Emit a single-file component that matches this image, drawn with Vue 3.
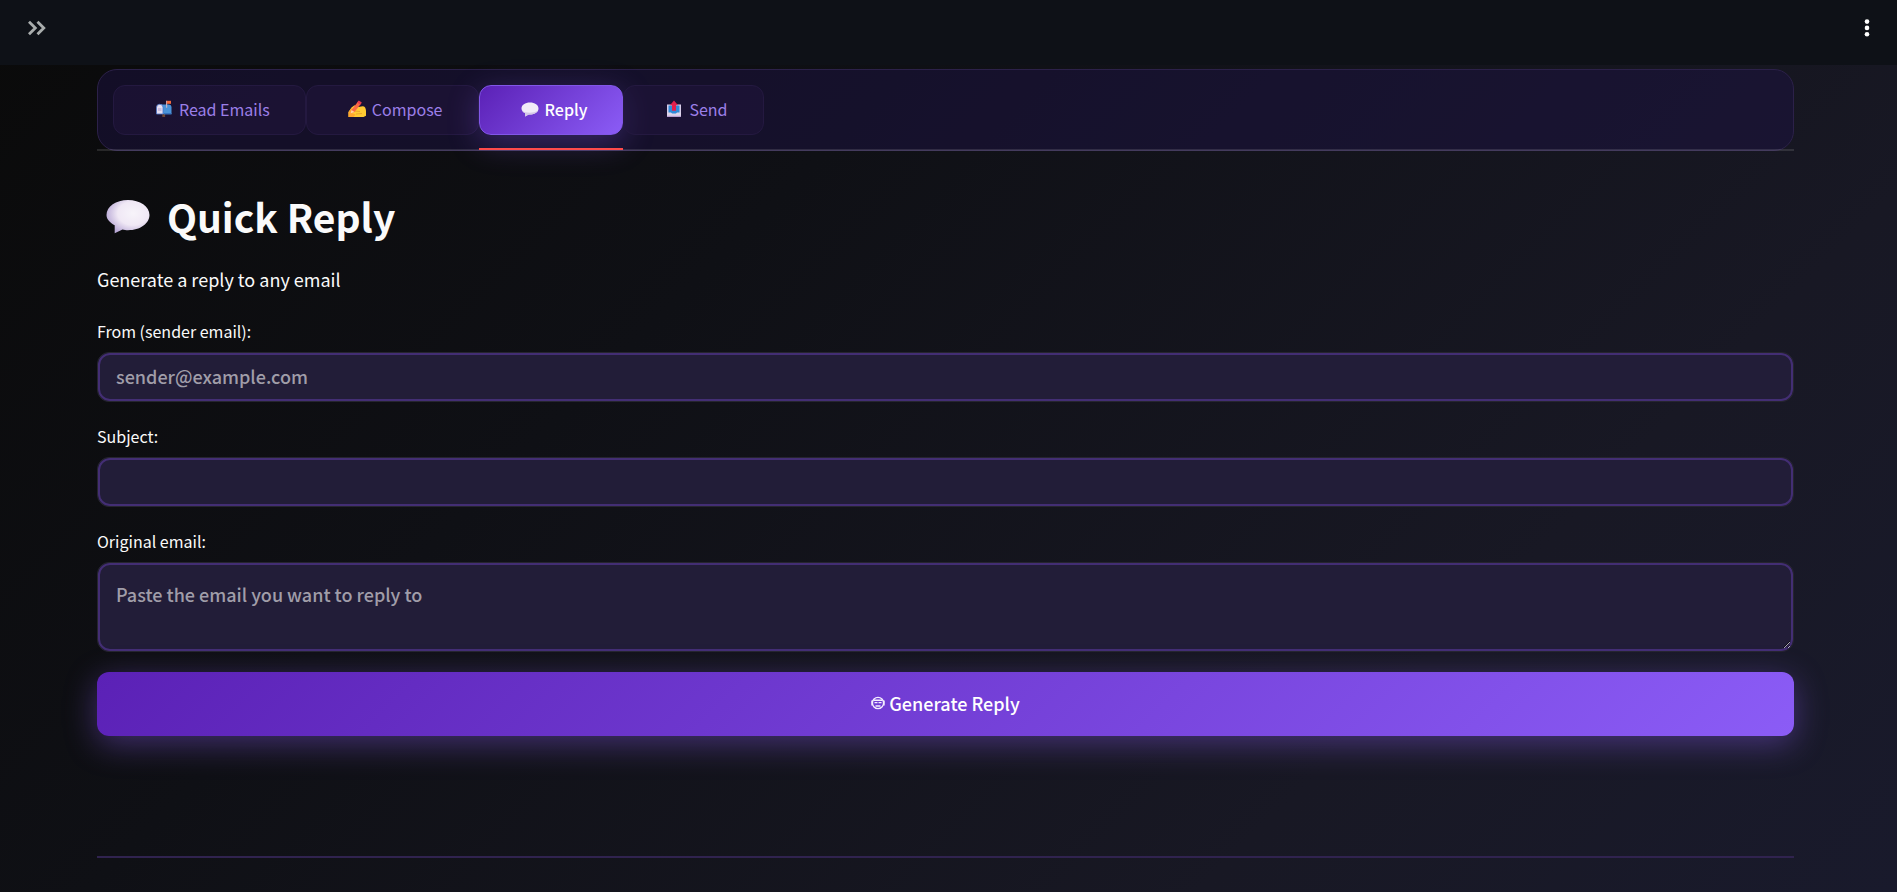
<script setup>
import { ref } from 'vue'

const tabs = [
  { id: 'read', label: 'Read Emails' },
  { id: 'compose', label: 'Compose' },
  { id: 'reply', label: 'Reply' },
  { id: 'send', label: 'Send' }
]
const active = ref('reply')
const sender = ref('')
const subject = ref('')
const original = ref('')
</script>

<template>
  <div class="app">
    <header class="topbar">
      <button class="icon-btn" type="button" aria-label="Open sidebar">
        <svg width="20" height="16" viewBox="0 0 20 16" fill="none" stroke="#a9adad" stroke-width="2.8">
          <path d="M2 1.700 8.300 8 2 14.300M10.500 1.700 16.800 8 10.500 14.300" />
        </svg>
      </button>
      <button class="icon-btn" type="button" aria-label="Main menu">
        <svg width="6" height="18" viewBox="0 0 6 18" fill="#fff">
          <circle cx="3" cy="2.600" r="2.300" /><circle cx="3" cy="8.900" r="2.300" /><circle cx="3" cy="15.200" r="2.300" />
        </svg>
      </button>
    </header>

    <main class="content">
      <div class="tabs" role="tablist">
        <button
          v-for="tab in tabs"
          :key="tab.id"
          type="button"
          role="tab"
          class="tab"
          :class="{ active: active === tab.id }"
          :aria-selected="active === tab.id"
          @click="active = tab.id"
        >
          <svg v-if="tab.id === 'read'" class="emoji" viewBox="0 0 18 18">
            <path d="M7.300 13h2.800v4H7.300z" fill="#6d4534" />
            <path d="M5 4.500h8.500a3 3 0 0 1 3 3V14H5z" fill="#4a93d8" />
            <path d="M9 13h7.500v1.500H9z" fill="#3673bd" />
            <path d="M1.500 7.500a3 3 0 0 1 6.500 0V14H1.500z" fill="#e6e0f2" stroke="#4a74c8" stroke-width=".8" />
            <path d="M3 8h3.500v3H3z" fill="#cbbddf" />
            <path d="M11 .8h1.200v7H11z" fill="#bcb3c9" />
            <path d="M11.700.8h4.300v3h-4.300z" fill="#f4693c" />
          </svg>
          <svg v-else-if="tab.id === 'compose'" class="emoji" viewBox="0 0 18 18">
            <path d="M.5 17V12l3-4.500 3-2.300 2.500 2 5.500-1c2.500 0 3.300 2 3.500 4.500v5l-2.500 1.300z" fill="#ffca32" />
            <path d="M.5 17V12l3-4 2 2-2 3 4 1.500-2 2.500z" fill="#ffa52e" />
            <path d="m6 11 6 .5M8 14l6-.5" stroke="#eba62d" fill="none" />
            <path d="m2.500 13.500 1-3.500 6.800-8.800 3 2.100L6.500 12z" fill="#fa6a45" />
            <path d="m9.200 2.500 1.600-2 3 2-1.500 2.200z" fill="#e9394e" />
            <path d="m2.500 13.500 1-3.500 3 2z" fill="#ffd6a0" />
          </svg>
          <svg v-else-if="tab.id === 'reply'" class="emoji" viewBox="0 0 18 18">
            <path d="M9 2.500c4.800 0 8.500 2.500 8.500 6s-3.700 6-8.500 6H7.800L4 16.500l.3-3.200C2 12.200.5 10.600.5 8.500c0-3.500 3.700-6 8.500-6z" fill="#f1ebf8" />
            <path d="M1 10.500c3 3 12 3 16 0-1.500 2.500-4.500 4-8 4H7.800L4 16.500l.3-3.200C2.800 12.600 1.500 11.700 1 10.500z" fill="#d3c6e6" />
          </svg>
          <svg v-else class="emoji" viewBox="0 0 18 18">
            <path d="M2 4.500h14V17H2z" fill="#d8cde8" />
            <path d="M3.500 5.500h11v8h-11z" fill="#2f8bd8" />
            <path d="M2 12.500h4l1.500 1.800h3l1.500-1.800h4V17H2z" fill="#ded5ea" />
            <path d="M2 15.800h14V17H2z" fill="#b89fd0" />
            <path d="m9 .5 4 4.700h-2v5.600H7V5.200H5z" fill="#e3204b" />
          </svg>
          <span>{{ tab.label }}</span>
        </button>
      </div>

      <h1 class="title">
        <svg class="bubble" viewBox="0 0 44 34">
          <defs>
            <radialGradient id="bubble-fill" cx=".62" cy=".4" r=".65">
              <stop offset="0" stop-color="#f7f4fa" />
              <stop offset=".55" stop-color="#f0e8f5" />
              <stop offset="1" stop-color="#b9a9d6" />
            </radialGradient>
          </defs>
          <path d="M22 0c12 0 21.500 6.500 21.500 15S34 30.200 22 30.200c-2 0-4-.3-5.500-.7L8.700 33.300V25.200C3.500 22.500.5 19 .5 15 .5 6.500 10 0 22 0z" fill="url(#bubble-fill)" />
        </svg>
        <span>Quick Reply</span>
      </h1>
      <p class="lead">Generate a reply to any email</p>

      <form class="form" @submit.prevent>
        <div class="field">
          <label for="sender">From (sender email):</label>
          <div class="box"><input id="sender" v-model="sender" type="text" placeholder="sender@example.com" /></div>
        </div>
        <div class="field">
          <label for="subject">Subject:</label>
          <div class="box"><input id="subject" v-model="subject" type="text" /></div>
        </div>
        <div class="field">
          <label for="original">Original email:</label>
          <div class="box"><textarea id="original" v-model="original" placeholder="Paste the email you want to reply to"></textarea></div>
        </div>
        <button class="submit" type="submit">
          <svg width="14" height="14" viewBox="0 0 14 14" fill="none" stroke="#f4eeff" stroke-width="1.400">
            <circle cx="7" cy="7" r="5.600" />
            <path d="M1 4.500v5M13 4.500v5" />
            <path d="M2.500 4.300h9M3.500 6.600h3M7.500 6.600h3M4.500 10h5" />
          </svg>
          <span>Generate Reply</span>
        </button>
      </form>
      <hr class="rule" />
    </main>
  </div>
</template>

<style>
body {
  margin: 0;
  background: #0a0a0a;
}
</style>

<style scoped>
.app {
  box-sizing: border-box;
  min-height: 100vh;
  background: linear-gradient(135deg, #0a0a0a 0%, #0f1015 35%, #181824 75%, #191a2c 100%);
  color: #fafafa;
  font-family: "Noto Sans CJK SC", "Noto Sans", sans-serif;
}
button, input, textarea {
  font-family: inherit;
}
.topbar {
  height: 65px;
  box-sizing: border-box;
  padding: 0 24px 10px 24px;
  display: flex;
  align-items: center;
  justify-content: space-between;
  background: #0e1117;
}
.icon-btn {
  display: flex;
  padding: 3px;
  border: 0;
  background: none;
  cursor: pointer;
}
.content {
  padding: 4px 103px 32px 97px;
}
.tabs {
  display: flex;
  height: 82px;
  box-sizing: border-box;
  padding: 15px;
  border: 1px solid #2c2149;
  border-radius: 20px;
  background: rgba(28, 18, 66, 0.5);
  position: relative;
}
.tabs::after {
  content: "";
  position: absolute;
  left: -1px;
  right: -1px;
  bottom: -1px;
  height: 2px;
  background: rgba(250, 250, 250, 0.12);
}
.tab {
  display: flex;
  align-items: center;
  gap: 6px;
  height: 50px;
  box-sizing: border-box;
  padding: 0 35px 2px 41px;
  border: 1px solid #241940;
  border-radius: 12px;
  background: rgba(35, 22, 65, 0.45);
  color: #9b7fe8;
  font-size: 16px;
  position: relative;
  cursor: pointer;
}
.tab.active {
  background: linear-gradient(135deg, #5b21b6, #8b5cf6);
  border-color: #8257e8;
  color: #fff;
  font-weight: 500;
  box-shadow: 0 8px 32px rgba(139, 92, 246, 0.3);
}
.tab.active::after {
  content: "";
  position: absolute;
  z-index: 1;
  left: -1px;
  right: -1px;
  bottom: -16px;
  height: 2px;
  background: #ff4b4b;
}
.emoji {
  width: 18px;
  height: 18px;
}
.title {
  display: flex;
  align-items: center;
  gap: 17px;
  height: 60px;
  margin: 36px 0 0;
  padding-left: 9px;
  font-size: 39px;
  line-height: 58px;
  font-weight: 600;
}
.title span {
  padding-bottom: 2px;
}
.bubble {
  width: 44px;
  height: 34px;
}
.lead {
  margin: 17px 0 0;
  font-size: 18px;
  line-height: 30px;
}
.form {
  display: flex;
  flex-direction: column;
  margin-top: 25px;
}
.field {
  margin-bottom: 22px;
}
.field:last-of-type {
  margin-bottom: 20px;
}
.field label {
  display: block;
  height: 33px;
  font-size: 16px;
  line-height: 24px;
}
.box {
  border: 1px solid #26252f;
  border-radius: 12px;
  background: #221d38;
  overflow: hidden;
}
.box input, .box textarea {
  display: block;
  box-sizing: border-box;
  width: 100%;
  height: 48px;
  padding: 0 16px 2px;
  border: 2px solid #432e74;
  border-radius: 12px;
  background: #221d38;
  color: #fafafa;
  font-size: 18px;
  font-weight: 500;
  outline: none;
}
.box textarea {
  height: 88px;
  padding: 15px 16px;
  line-height: 28px;
  resize: vertical;
}
.box input::placeholder, .box textarea::placeholder {
  color: #a09da9;
  opacity: 1;
}
.submit {
  display: flex;
  align-items: center;
  justify-content: center;
  gap: 4px;
  height: 64px;
  padding: 0 0 2px;
  border: 0;
  border-radius: 12px;
  background: linear-gradient(135deg, #5b21b6, #8b5cf6);
  box-shadow: 0 8px 32px rgba(139, 92, 246, 0.4);
  color: #fff;
  font-size: 18px;
  font-weight: 500;
  cursor: pointer;
}
.rule {
  height: 2px;
  margin: 120px 0 0;
  border: 0;
  background: #30234f;
}
</style>
